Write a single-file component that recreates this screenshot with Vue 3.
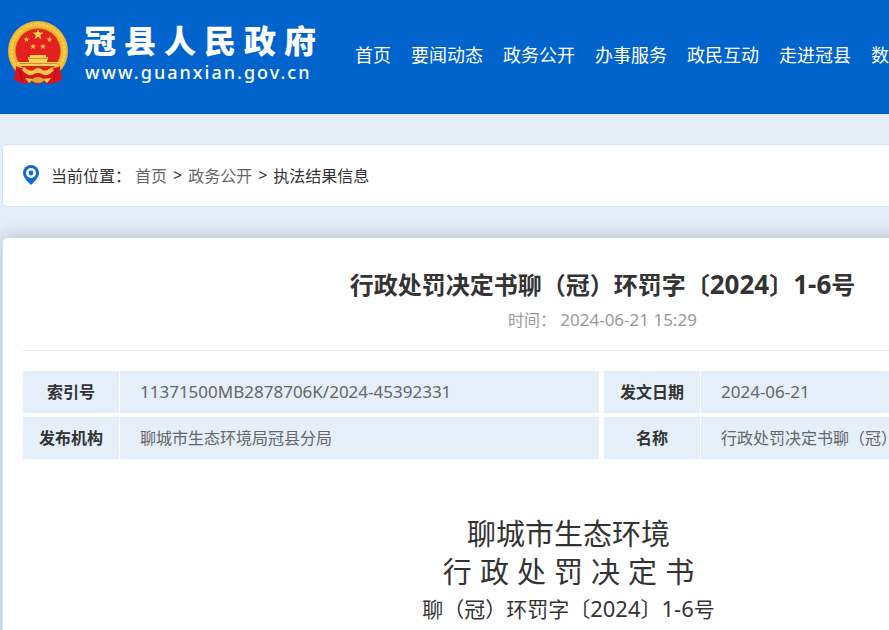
<template>
  <div class="page">
    <header class="header">
      <div class="container header-inner">
        <a class="logo" href="#">
          <svg class="emblem" viewBox="0 0 60 64" aria-hidden="true">
            <path d="M8 44 L6 59 L17 63 L25 61 L30 64 L35 61 L43 63 L54 59 L52 44Z" fill="#d9151b" />
            <circle cx="30" cy="30" r="30" fill="#f0b62f" />
            <circle cx="30" cy="30" r="26.5" fill="none" stroke="#f8cd52" stroke-width="3" stroke-dasharray="3 1" />
            <circle cx="30" cy="30" r="23" fill="#c98a1c" />
            <circle cx="30" cy="30" r="22.2" fill="#e3211f" />
            <polygon :points="star(30, 13.5, 5.8)" fill="#fbd34a" />
            <polygon
              v-for="(s, i) in smallStars"
              :key="i"
              :points="star(s[0], s[1], 3.3)"
              fill="#f4bd42"
            />
            <path d="M22 34 H38 V36 H40 V39 H39 V41 H51 L49 45 H11 L9 41 H21 V39 H20 V36 H22Z" fill="#f9d157" />
            <path d="M20 37.5 H40 M11 42.5 H49" stroke="#d98b25" stroke-width="1" />
            <path d="M8 45 C18 50 42 50 52 45 L53 59 L43 63 L35 58 L25 58 L17 63 L7 59Z" fill="#d9151b" />
            <path d="M16 46 Q23 52 27 48 Q30 46 33 48 Q37 52 44 46 L46 49 Q39 57 34 53 Q30 51 26 53 Q21 57 14 49Z" fill="#f5c545" />
            <path d="M17 57 L25 58 L21 62Z M43 57 L35 58 L39 62Z" fill="#f9d157" />
            <ellipse cx="30" cy="59" rx="6" ry="3" fill="#d9a634" />
            <path d="M12 49 L14 60 M48 49 L46 60" stroke="#a80f16" stroke-width="1" />
          </svg>
          <span class="logo-text">
            <strong>冠县人民政府</strong>
            <span>www.guanxian.gov.cn</span>
          </span>
        </a>
        <nav class="nav">
          <a v-for="item in navList" :key="item" href="#">{{ item }}</a>
        </nav>
      </div>
    </header>

    <div class="container location">
      <svg class="pin" viewBox="0 0 16 20" aria-hidden="true">
        <path d="M8 0 A8 8 0 0 0 0 8 C0 12 4 16 8 20 C12 16 16 12 16 8 A8 8 0 0 0 8 0Z" fill="#0f6bd0" />
        <circle cx="8" cy="8" r="5" fill="#fff" />
        <circle cx="8" cy="8" r="2.4" fill="#0f6bd0" />
      </svg>
      <span class="location-label">当前位置：</span>
      <a href="#">首页</a>
      <i>&gt;</i>
      <a href="#">政务公开</a>
      <i>&gt;</i>
      <span>执法结果信息</span>
    </div>

    <main class="container article">
      <div class="article-head">
        <h1>行政处罚决定书聊（冠）环罚字〔<span>2024</span>〕<span>1-6</span>号</h1>
        <p>时间： <time>2024-06-21 15:29</time></p>
      </div>

      <table class="info">
        <colgroup>
          <col class="col-label" />
          <col class="col-value" />
          <col class="col-label" />
          <col />
        </colgroup>
        <tbody>
          <tr>
            <th scope="row">索引号</th>
            <td class="num">11371500MB2878706K/2024-45392331</td>
            <th scope="row">发文日期</th>
            <td class="num">2024-06-21</td>
          </tr>
          <tr>
            <th scope="row">发布机构</th>
            <td>聊城市生态环境局冠县分局</td>
            <th scope="row">名称</th>
            <td>行政处罚决定书聊（冠）环罚字〔2024〕1-6号</td>
          </tr>
        </tbody>
      </table>

      <div class="content">
        <p class="big">聊城市生态环境</p>
        <p class="big">行 政 处 罚 决 定 书</p>
        <p class="code">聊（冠）环罚字〔<span>2024</span>〕<span>1-6</span>号</p>
      </div>
    </main>
  </div>
</template>

<script setup>
import { ref } from "vue";

const navList = ref([
  "首页",
  "要闻动态",
  "政务公开",
  "办事服务",
  "政民互动",
  "走进冠县",
  "数据开放",
]);

const smallStars = [
  [18.5, 18.5],
  [41.5, 18.5],
  [25, 25.5],
  [35, 25.5],
];

// 五角星顶点
const star = (cx, cy, r) => {
  const points = [];
  for (let i = 0; i < 10; i++) {
    const radius = i % 2 ? r * 0.4 : r;
    const angle = (Math.PI / 5) * i - Math.PI / 2;
    points.push(`${cx + radius * Math.cos(angle)},${cy + radius * Math.sin(angle)}`);
  }
  return points.join(" ");
};
</script>

<style>
body {
  margin: 0;
  background: #e4eef9;
}
</style>

<style scoped>
.page {
  min-height: 100vh;
  overflow: hidden;
  font-family: "Noto Sans", "Noto Sans CJK SC", sans-serif;
  font-size: 16px;
  color: #333;
}

a {
  color: inherit;
  text-decoration: none;
}

.container {
  box-sizing: border-box;
  width: 1200px;
  margin: 0 auto 0 2px;
}

.header {
  background: #0064cc;
  border-bottom: 1px solid #0059bb;
}

.header-inner {
  display: flex;
  align-items: center;
  height: 113px;
  padding: 0 6px 8px;
}

.logo {
  display: flex;
  align-items: center;
  gap: 16px;
  width: 347px;
  color: #fff;
}

.emblem {
  width: 60px;
  height: 64px;
}

.logo-text {
  display: flex;
  flex-direction: column;
  padding-bottom: 6px;
}

.logo-text strong {
  font-family: "Noto Sans CJK SC", sans-serif;
  font-size: 32px;
  font-weight: 900;
  line-height: 44px;
  letter-spacing: 8px;
}

.logo-text span {
  padding-left: 1px;
  font-size: 18px;
  font-weight: 500;
  line-height: 22px;
  letter-spacing: 2px;
}

.nav {
  display: flex;
  gap: 20px;
  padding-top: 4px;
  color: #fff;
  font-size: 18px;
  line-height: 28px;
  white-space: nowrap;
}

.location {
  display: flex;
  align-items: center;
  height: 63px;
  margin-top: 30px;
  padding: 0 20px 2px;
  background: #fff;
  border: 1px solid #cfe5fa;
  border-radius: 5px;
}

.location a {
  color: #666;
}

.location i {
  margin: 0 6px;
  font-style: normal;
}

.pin {
  width: 16px;
  height: 20px;
  margin-right: 12px;
}

.location-label {
  margin-right: 4px;
}

.article {
  margin-top: 31px;
  padding: 30px 20px 60px;
  background: #fff;
  border-left: 1px solid #d3e3f3;
  border-radius: 5px 5px 0 0;
  box-shadow: 0 0 20px rgba(90, 110, 130, 0.4);
}

.article-head {
  padding-bottom: 16px;
  border-bottom: 1px solid #e8e8e8;
  text-align: center;
}

.article-head h1 {
  margin: 0;
  font-size: 24px;
  line-height: 32px;
}

.article-head h1 span {
  font-size: 26px;
}

.article-head p {
  margin: 5px 0 0;
  color: #999;
  line-height: 28px;
}

.article-head time,
.num {
  font-size: 17px;
}

.info {
  width: 100%;
  margin-top: 16px;
  table-layout: fixed;
  border-spacing: 0 4px;
}

.col-label {
  width: 97px;
}

.col-value {
  width: 484px;
}

.info th,
.info td {
  box-sizing: border-box;
  height: 42px;
  padding: 0 0 2px;
  background: #e4effa;
  border-right: 1px solid #fff;
  white-space: nowrap;
}

.info td {
  padding-left: 20px;
  border-right-width: 5px;
  color: #666;
}

.content {
  margin-top: 53px;
  padding-right: 68px;
  text-align: center;
}

.content p {
  margin: 0;
  line-height: 38px;
}

.content .big {
  font-family: "Liberation Sans", "Noto Sans CJK SC", sans-serif;
  font-size: 29px;
}

.content .code {
  font-size: 21px;
  line-height: 32px;
}

.code span {
  font-size: 22px;
}
</style>
